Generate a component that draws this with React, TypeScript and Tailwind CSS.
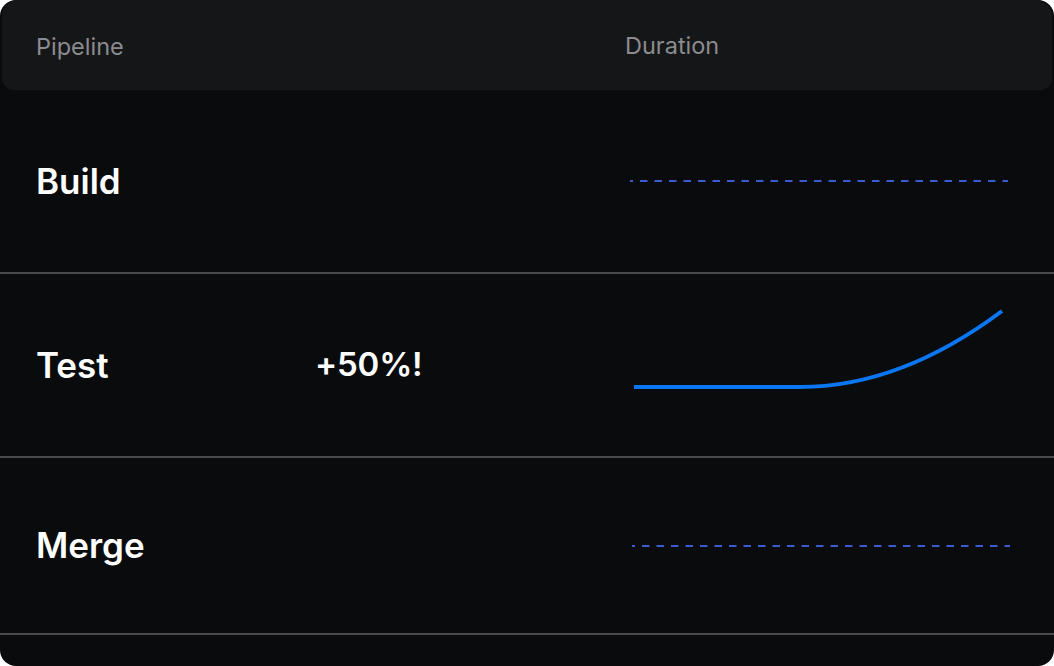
const rows = [
  { name: "Build", delta: "", chart: "flat", height: "h-[182px]", offset: 10 },
  { name: "Test", delta: "+50%!", chart: "curve", height: "h-[182px]", offset: 0 },
  { name: "Merge", delta: "", chart: "flat", height: "h-[175px]", offset: 12 },
];

function FlatLine({ offset }: { offset: number }) {
  return (
    <svg width="400" height="20" viewBox="0 0 400 20" className="block">
      <line
        x1={offset}
        y1="10"
        x2={offset + 378}
        y2="10"
        stroke="#3d5bd1"
        strokeWidth="2"
        strokeDasharray="7.5 7"
        strokeDashoffset="4.5"
      />
    </svg>
  );
}

function Curve() {
  return (
    <svg width="400" height="120" viewBox="0 0 400 120" className="block">
      <path
        d="M14 82 L180 82 C260 82 330 45 382 6"
        fill="none"
        stroke="#0a76f2"
        strokeWidth="4"
      />
    </svg>
  );
}

export default function App() {
  return (
    <div className="min-h-screen w-full bg-white font-['Inter',sans-serif]">
      <div className="h-[666px] w-full overflow-hidden rounded-2xl bg-[#0a0b0d] px-[2px]">
        {/* header */}
        <div className="grid h-[90px] grid-cols-[278px_311px_1fr] items-center rounded-b-xl rounded-t-2xl bg-[#151618] px-[34px] text-[23.5px] text-[#8b8c8f]">
          <span className="pt-[3px]">Pipeline</span>
          <span></span>
          <span className="pt-[1px]">Duration</span>
        </div>

        {rows.map((row) => (
          <div key={row.name} className="-mx-[2px] border-b-2 border-[#4a4b4e]">
            <div
              className={`grid ${row.height} grid-cols-[279px_310px_1fr] items-center px-9 text-[35px] font-semibold text-white`}
            >
              <span>{row.name}</span>
              <span className="text-[33px] tracking-[-0.2px]">{row.delta}</span>
              <div className="-ml-[5px]">
                {row.chart === "curve" ? <Curve /> : <FlatLine offset={row.offset} />}
              </div>
            </div>
          </div>
        ))}
      </div>
    </div>
  );
}
